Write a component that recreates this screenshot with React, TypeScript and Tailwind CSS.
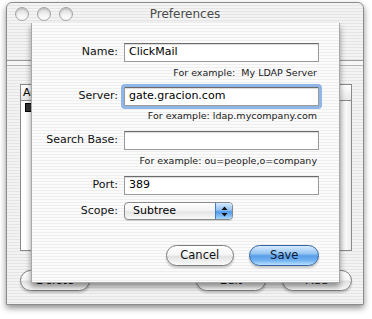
import React from "react";

const font = "font-['DejaVu_Sans',sans-serif]";

function Field({ label, value, focused }: { label: string; value?: string; focused?: boolean }) {
  return (
    <div className="flex items-center h-[19px]">
      <div className="w-[86px] pr-[0px] text-right text-[11px] text-[#111]">{label}</div>
      <div className="ml-[6px] flex-1">
        <div
          className={
            "h-[19px] bg-white border border-[#9a9a9a] border-t-[#6a6a6a] shadow-[inset_0_1px_1px_rgba(0,0,0,0.15)] flex items-center pl-[4px] text-[11px] text-black " +
            (focused ? "outline outline-[3px] outline-[#8fb6e6] rounded-[1px]" : "")
          }
        >
          {value}
        </div>
      </div>
    </div>
  );
}

function Example({ text, cls }: { text: string; cls: string }) {
  return (
    <div className={"flex justify-end pr-[2px] text-[9.5px] leading-[12px] text-[#1a1a1a] whitespace-pre " + cls}>{text}</div>
  );
}

function Traffic() {
  return (
    <div className="w-[14px] h-[14px] rounded-full border border-[#a4a4a4] bg-[linear-gradient(180deg,#d9d9d9_0%,#f4f4f4_60%,#ffffff_100%)] shadow-[inset_0_1px_2px_rgba(0,0,0,0.18)]" />
  );
}

function AquaButton({ label, w, blue }: { label: string; w: string; blue?: boolean }) {
  return (
    <div
      className={
        "h-[21px] rounded-full flex items-center justify-center text-[11.5px] border shadow-[0_2px_2px_rgba(0,0,0,0.2)] " +
        w +
        " " +
        (blue
          ? "border-[#33629e] text-[#0b1a33] bg-[linear-gradient(180deg,#d9ecff_0%,#94c4f2_40%,#5a9ee8_52%,#6fb0f0_75%,#b9e2ff_100%)]"
          : "border-[#7c7c7c] text-[#111] bg-[linear-gradient(180deg,#ffffff_0%,#f6f6f6_45%,#e2e2e2_55%,#fbfbfb_100%)]")
      }
    >
      {label}
    </div>
  );
}

export default function App() {
  return (
    <div className={"w-[372px] h-[319px] bg-white relative overflow-hidden " + font}>
      {/* window */}
      <div className="absolute left-[6px] top-[2px] w-[358px] h-[303px] rounded-t-[6px] border border-[#8c8c8c] shadow-[0_3px_6px_rgba(0,0,0,0.45)] overflow-hidden bg-[repeating-linear-gradient(180deg,#f3f3f3_0px,#f3f3f3_2px,#e5e5e5_2px,#e5e5e5_3px)] flex flex-col">
        {/* title bar */}
        <div className="h-[21px] flex items-center pl-[8px] relative shrink-0">
          <div className="flex gap-[8px]">
            <Traffic />
            <Traffic />
            <Traffic />
          </div>
          <div className="absolute inset-0 flex items-center justify-center text-[12px] text-[#4a4a4a]">Preferences</div>
        </div>
        {/* toolbar separator */}
        <div className="h-[36px] shrink-0" />
        <div className="h-[1px] bg-[#9a9a9a] shrink-0" />
        <div className="h-[4px] bg-[#f7f7f7] shrink-0" />
        <div className="h-[1px] bg-[#b5b5b5] shrink-0" />
        {/* table */}
        <div className="ml-[13px] mt-[18px] w-[332px] h-[167px] border border-[#8a8a8a] bg-white flex flex-col">
          <div className="h-[16px] border-b border-[#8a8a8a] flex text-[11px] bg-[linear-gradient(180deg,#ffffff,#e8e8e8)]">
            <div className="pl-[2px] flex-1">Active</div>
            <div className="w-[12px] border-l border-[#8a8a8a]" />
          </div>
          <div className="flex flex-1">
            <div className="flex-1 pl-[4px] pt-[2px]">
              <div className="w-[9px] h-[9px] bg-[#333] border border-[#000]" />
            </div>
            <div className="w-[12px] border-l border-[#8a8a8a] bg-[repeating-linear-gradient(90deg,#e8e8e8_0px,#fafafa_6px,#e8e8e8_12px)]" />
          </div>
        </div>
        {/* bottom buttons */}
        <div className="flex mt-[19px] ml-[13px] w-[332px]">
          <AquaButton label="Delete" w="w-[70px]" />
          <div className="flex-1" />
          <AquaButton label="Edit" w="w-[70px]" />
          <div className="w-[16px]" />
          <AquaButton label="Add" w="w-[70px]" />
        </div>
      </div>

      {/* sheet */}
      <div className="absolute left-[31px] top-[23px] w-[309px] h-[260px] border-x border-b border-[#a8a8a8] shadow-[0_4px_6px_rgba(0,0,0,0.4)] bg-[repeating-linear-gradient(180deg,#fbfbfb_0px,#fbfbfb_2px,#eeeeee_2px,#eeeeee_3px)] flex flex-col pt-[20px] pr-[20px]">
        <Field label="Name:" value="ClickMail" />
        <Example cls="mt-[5px]" text="For example:  My LDAP Server" />
        <div className="mt-[8px]">
          <Field label="Server:" value="gate.gracion.com" focused />
        </div>
        <Example cls="mt-[4px]" text="For example: ldap.mycompany.com" />
        <div className="mt-[9px]">
          <Field label="Search Base:" />
        </div>
        <Example cls="mt-[5px]" text="For example: ou=people,o=company" />
        <div className="mt-[9px]">
          <Field label="Port:" value="389" />
        </div>
        <div className="mt-[7px] flex items-center h-[18px]">
          <div className="w-[86px] text-right text-[11px] text-[#111]">Scope:</div>
          <div className="ml-[6px] w-[109px] h-[18px] rounded-[4px] border border-[#8a8a8a] flex overflow-hidden bg-[linear-gradient(180deg,#ffffff_0%,#f2f2f2_50%,#e4e4e4_55%,#fafafa_100%)] shadow-[0_1px_1px_rgba(0,0,0,0.15)]">
            <div className="flex-1 pl-[8px] text-[11px] flex items-center">Subtree</div>
            <div className="w-[17px] border-l border-[#4a7bc0] bg-[linear-gradient(180deg,#d6ebff_0%,#8fc0f3_45%,#4f97e6_55%,#a6d6ff_100%)] flex items-center justify-center">
              <svg width="7" height="11" viewBox="0 0 7 11">
                <path d="M3.5 0.5 L6.5 4 L0.5 4 Z" fill="#111" />
                <path d="M3.5 10.5 L6.5 7 L0.5 7 Z" fill="#111" />
              </svg>
            </div>
          </div>
        </div>
        <div className="mt-[25px] flex pl-[134px]">
          <AquaButton label="Cancel" w="w-[68px]" />
          <div className="w-[16px]" />
          <AquaButton label="Save" w="w-[70px]" blue />
        </div>
      </div>
    </div>
  );
}
